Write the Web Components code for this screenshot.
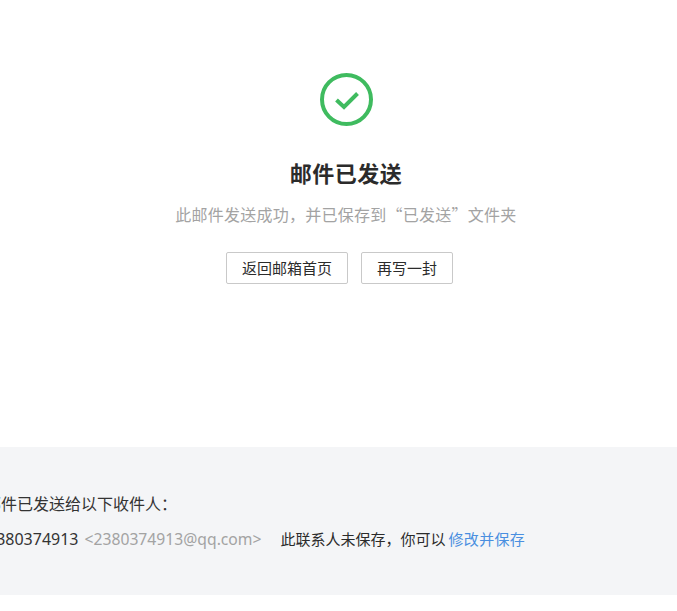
<!DOCTYPE html>
<html lang="zh-CN"><head><meta charset="utf-8"><title>邮件已发送</title>
<style>
html,body{margin:0;padding:0;background:#fff;overflow:hidden}
body{font-family:"Noto Sans CJK SC","Noto Sans",sans-serif;width:677px;height:611px}
</style></head><body>
<sent-page>
  <sent-result>
    <span slot="title">邮件已发送</span>
    <span slot="desc">此邮件发送成功，并已保存到“已发送”文件夹</span>
    <mail-button>返回邮箱首页</mail-button>
    <mail-button>再写一封</mail-button>
  </sent-result>
  <recipient-panel>
    <span slot="heading">邮件已发送给以下收件人：</span>
    <span slot="name">2380374913</span>
    <span slot="addr">&lt;2380374913@qq.com&gt;</span>
    <span slot="note">此联系人未保存，你可以</span>
    <span slot="action">修改并保存</span>
  </recipient-panel>
</sent-page>
<script>
function def(name, html){
  customElements.define(name, class extends HTMLElement{
    constructor(){super();this.attachShadow({mode:'open'}).innerHTML=html;}
  });
}
def('sent-page',`<style>:host{display:block;width:677px;height:611px;overflow:hidden}</style><slot></slot>`);
def('sent-result',`<style>
:host{display:flex;flex-direction:column;align-items:center;box-sizing:border-box;height:447px;padding-top:73px;width:692px}
svg{display:block;width:53px;height:53px}
.t{margin-top:30px;font-size:22px;letter-spacing:.5px;line-height:32px;font-weight:700;color:#2b2b2b}
.d{margin-top:15px;font-size:16px;letter-spacing:.25px;line-height:22px;color:#a3a3a3}
.b{display:flex;margin-top:27px}
::slotted(mail-button){margin-right:13px}
</style>
<svg viewBox="0 0 53 53" fill="none" stroke="#3fbb5f"><circle cx="26.500" cy="26.500" r="24.500" stroke-width="4"/><path d="M16.500 27l7.500 7 13.500-13.500" stroke-width="4"/></svg>
<div class="t"><slot name="title"></slot></div>
<div class="d"><slot name="desc"></slot></div>
<div class="b"><slot></slot></div>`);
def('mail-button',`<style>
:host{display:block;box-sizing:border-box;height:32px;padding:0 15px;border:1px solid #c9c9c9;border-radius:2px;background:#fff;color:#2b2b2b;font-size:15px;line-height:30px;white-space:nowrap}
</style><slot></slot>`);
def('recipient-panel',`<style>
:host{display:block;box-sizing:border-box;height:148px;background:#f4f5f7;padding-top:45px;color:#333;overflow:hidden;white-space:nowrap}
.inner{margin-left:-15px}
.h{font-size:16px;line-height:22px}
.r{display:flex;align-items:baseline;margin-top:14px;line-height:22px}
.n{font-family:"Noto Sans",sans-serif;font-size:16px;margin-left:2px}
.a{font-family:"Noto Sans",sans-serif;font-size:15.700px;color:#a3a3a3;margin-left:6px}
.o{font-size:15px;margin-left:19px;color:#2b2b2b}
.l{font-size:15px;letter-spacing:.3px;margin-left:3px;color:#4a8fe0}
</style>
<div class="inner">
<div class="h"><slot name="heading"></slot></div>
<div class="r"><span class="n"><slot name="name"></slot></span><span class="a"><slot name="addr"></slot></span><span class="o"><slot name="note"></slot></span><span class="l"><slot name="action"></slot></span></div>
</div>`);
</script>
</body></html>
